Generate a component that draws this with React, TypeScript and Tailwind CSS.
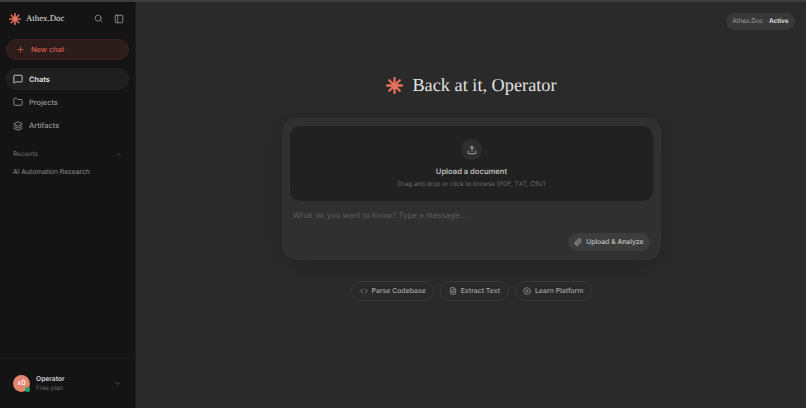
import { ChevronDown, ChevronUp, Code, FileText, Folder, Layers, MessageSquare, Paperclip, PanelLeft, Plus, CirclePlay, Search, Upload } from "lucide-react";

const sans = "font-['Inter','Liberation_Sans',sans-serif]";

const Spark: React.FC<{ size: number }> = ({ size }) => (
  <svg width={size} height={size} viewBox="0 0 24 24" stroke="#e8705f" strokeWidth="3.2" strokeLinecap="round">
    <path d="M12 1.5v21M1.5 12h21M4.6 4.6l14.8 14.8M19.4 4.6L4.6 19.4" />
  </svg>
);

const NavItem: React.FC<{ icon: React.ReactNode; label: string; active?: boolean }> = ({ icon, label, active }) => (
  <div className={`flex h-[22px] items-center gap-[6px] rounded-full pl-[7px] text-[7.4px] font-medium ${active ? "bg-[#1f1f1f] text-[#e4e4e4] font-semibold" : "text-[#9c9c9c]"}`}>
    {icon}
    <span>{label}</span>
  </div>
);

const Chip: React.FC<{ icon: React.ReactNode; label: string }> = ({ icon, label }) => (
  <div className="flex h-[20px] items-center gap-[4px] rounded-full border border-[#383838] px-[7.5px] text-[6.9px] font-medium text-[#a8a8a8]">
    {icon}
    <span>{label}</span>
  </div>
);

export default function App() {
  return (
    <div className={`flex h-[408px] w-[806px] flex-col overflow-hidden bg-[#2a2a2a] antialiased [text-rendering:geometricPrecision] ${sans}`}>
      <div className="h-[2px] shrink-0 bg-[#3d3d3d]" />
      <div className="flex min-h-0 flex-1">
        <aside className="flex w-[136px] shrink-0 flex-col border-r border-[#1d1d1d] bg-[#141414]">
          <div className="flex items-center px-[9px] pt-[10px]">
            <Spark size={12} />
            <span className="ml-[5px] font-['Liberation_Serif',serif] text-[8.8px] text-[#e0e0e0]">Athex.Doc</span>
            <Search className="ml-auto mr-[-1px] h-[9px] w-[9px] text-[#9a9a9a]" />
            <PanelLeft className="ml-[12px] mr-[2px] h-[10px] w-[10px] text-[#9a9a9a]" />
          </div>
          <div className="mx-[6px] mt-[14px] flex h-[21px] items-center gap-[6px] rounded-full border border-[#3d2421] bg-[#2c1d1b] pl-[9px] text-[7.4px] font-medium text-[#d9604f]">
            <Plus className="h-[9px] w-[9px]" />
            <span>New chat</span>
          </div>
          <nav className="mx-[6px] mt-[8px] flex flex-col gap-[1.3px]">
            <NavItem active icon={<MessageSquare className="h-[10px] w-[10px]" />} label="Chats" />
            <NavItem icon={<Folder className="h-[10px] w-[10px]" />} label="Projects" />
            <NavItem icon={<Layers className="h-[10px] w-[10px]" />} label="Artifacts" />
          </nav>
          <div className="mt-[13px] flex items-center justify-between pl-[13px] pr-[13px] text-[6.5px] font-medium text-[#666666]">
            <span>Recents</span>
            <ChevronUp className="h-[7px] w-[7px]" />
          </div>
          <div className="mt-[7px] pl-[13px] text-[6.8px] text-[#8a8a8a]">Ai Automation Research</div>
          <div className="mt-auto flex h-[50px] items-center border-t border-[#1c1c1c] pl-[13px] pr-[14px]">
            <div className="relative flex h-[17px] w-[17px] items-center justify-center rounded-full bg-[#e58570] text-[7px] font-medium text-white">
              x0
              <span className="absolute bottom-0 right-0 h-[5px] w-[5px] rounded-full bg-[#1fa56b]" />
            </div>
            <div className="ml-[6px] flex flex-col leading-[9px]">
              <span className="text-[6.7px] font-semibold text-[#d4d4d4]">Operator</span>
              <span className="text-[6.2px] text-[#6a6a6a]">Free plan</span>
            </div>
            <ChevronDown className="ml-auto h-[7px] w-[7px] text-[#777777]" />
          </div>
        </aside>

        <main className="relative flex flex-1 flex-col items-center">
          <div className="absolute right-[11px] top-[11px] flex h-[17px] items-center rounded-full bg-[#383838] px-[6.5px] text-[6.4px] text-[#9e9e9e]">
            Athex.Doc ·&nbsp;<span className="font-semibold text-[#e2e2e2]">Active</span>
          </div>

          <div className="ml-[1px] mt-[71px] flex items-center gap-[9px]">
            <Spark size={17} />
            <h1 className="font-['Liberation_Serif',serif] text-[18.3px] leading-[24px] text-[#e2e2e2]">Back at it, Operator</h1>
          </div>

          <div className="ml-[1px] mt-[21px] w-[379px] rounded-[14px] border border-[#333333] bg-[#303030] p-[7px] shadow-[0_4px_24px_rgba(0,0,0,0.18)]">
            <div className="flex h-[75px] flex-col items-center rounded-[10px] bg-[#212121] pt-[13px]">
              <div className="flex h-[21px] w-[21px] items-center justify-center rounded-full bg-[#2e2e2e]">
                <Upload className="h-[10px] w-[10px] text-[#c4c4c4]" />
              </div>
              <div className="mt-[6px] text-[7.6px] font-semibold leading-[11px] text-[#bdbdbd]">Upload a document</div>
              <div className="mt-[2px] text-[6.3px] leading-[10px] text-[#6e6e6e]">Drag and drop or click to browse (PDF, TXT, CSV)</div>
            </div>
            <div className="mt-[9px] pl-[3px] text-[7.9px] leading-[11px] text-[#5e5e5e]">What do you want to know? Type a message...</div>
            <div className="mt-[12px] flex justify-end pb-[1px] pr-[3px]">
              <div className="flex h-[18px] items-center gap-[4px] rounded-full bg-[#3d3d3d] px-[6.5px] text-[6.8px] font-medium text-[#c2c2c2]">
                <Paperclip className="h-[8px] w-[8px]" />
                <span>Upload &amp; Analyze</span>
              </div>
            </div>
          </div>

          <div className="ml-[1px] mt-[21px] flex gap-[6px]">
            <Chip icon={<Code className="h-[8px] w-[8px]" />} label="Parse Codebase" />
            <Chip icon={<FileText className="h-[8px] w-[8px]" />} label="Extract Text" />
            <Chip icon={<CirclePlay className="h-[8px] w-[8px]" />} label="Learn Platform" />
          </div>
        </main>
      </div>
    </div>
  );
}
